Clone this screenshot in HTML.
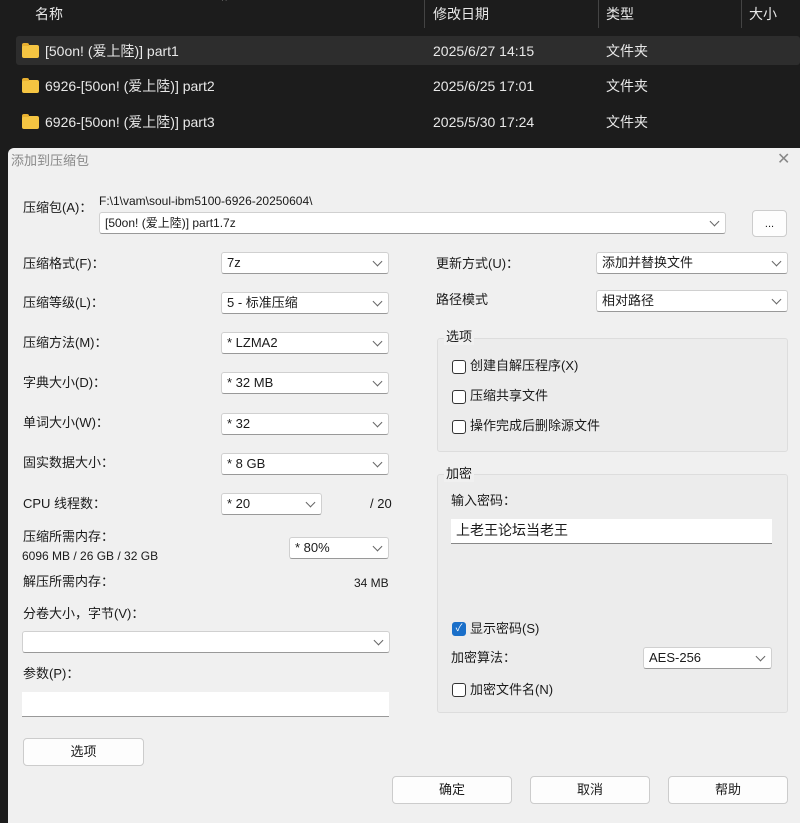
<!DOCTYPE html><html><head><meta charset="utf-8"><style>
*{box-sizing:border-box;margin:0;padding:0}
body{width:800px;height:823px;background:#1c1c1c;position:relative;overflow:hidden;font-family:"Liberation Sans","Noto Sans CJK SC",sans-serif;font-size:13px;color:#1a1a1a;line-height:16px}
.a{position:absolute;white-space:nowrap}
.w{color:#e8e8e8;font-size:14px;line-height:18px}
.dlg{position:absolute;left:8px;top:148px;width:800px;height:675px;background:#f0f0f0;border-radius:6px 0 0 0}
.cb{position:absolute;height:22px;background:#fff;border:1px solid #d0d0d0;border-bottom-color:#999;border-radius:3px;padding:2px 0 0 5px;font-size:13px}
.cb:after{content:"";position:absolute;right:7px;top:5px;width:6px;height:6px;border-right:1px solid #666;border-bottom:1px solid #666;transform:rotate(45deg)}
.btn{position:absolute;height:28px;background:#fdfdfd;border:1px solid #ccc;border-radius:4px;text-align:center;line-height:26px;font-size:13px}
.gb{position:absolute;border:1px solid #ddd;border-radius:3px;background:#ececec}
.ck{position:absolute;width:14px;height:14px;border:1px solid #333;border-radius:3px;background:#fff}
.fold{position:absolute;width:17px;height:13px;background:#f5c542;border-radius:2px}
.fold:before{content:"";position:absolute;left:0;top:-2px;width:7px;height:3px;background:#e8b030;border-radius:2px 2px 0 0}
</style></head><body>
<div class="a w" style="left:35px;top:5px">名称</div>
<div class="a" style="left:222px;top:-6px;color:#aaa;font-size:10px">^</div>
<div class="a" style="left:424px;top:0;width:1px;height:28px;background:#444"></div>
<div class="a w" style="left:433px;top:5px">修改日期</div>
<div class="a" style="left:598px;top:0;width:1px;height:28px;background:#444"></div>
<div class="a w" style="left:606px;top:5px">类型</div>
<div class="a" style="left:741px;top:0;width:1px;height:28px;background:#444"></div>
<div class="a w" style="left:749px;top:5px">大小</div>
<div class="a" style="left:16px;top:36px;width:784px;height:29px;background:#2d2d2d;border-radius:3px"></div>
<div class="fold" style="left:22px;top:45px"></div><div class="a w" style="left:45px;top:42px">[50on! (爱上陸)] part1</div><div class="a w" style="left:433px;top:42px">2025/6/27 14:15</div><div class="a w" style="left:606px;top:42px">文件夹</div>
<div class="fold" style="left:22px;top:80px"></div><div class="a w" style="left:45px;top:77px">6926-[50on! (爱上陸)] part2</div><div class="a w" style="left:433px;top:77px">2025/6/25 17:01</div><div class="a w" style="left:606px;top:77px">文件夹</div>
<div class="fold" style="left:22px;top:116px"></div><div class="a w" style="left:45px;top:113px">6926-[50on! (爱上陸)] part3</div><div class="a w" style="left:433px;top:113px">2025/5/30 17:24</div><div class="a w" style="left:606px;top:113px">文件夹</div>
<div class="dlg"></div>
<div class="a" style="left:11px;top:153px;color:#888;font-size:13px">添加到压缩包</div>
<div class="a" style="left:777px;top:152px;color:#888;font-size:16px;font-weight:300">✕</div>
<div class="a" style="left:23px;top:200px">压缩包(A)：</div>
<div class="a" style="left:99px;top:193px;font-size:12px">F:\1\vam\soul-ibm5100-6926-20250604\</div>
<div class="cb" style="left:99px;top:212px;width:627px;font-size:12px">[50on! (爱上陸)] part1.7z</div>
<div class="btn" style="left:752px;top:210px;width:35px;height:27px;font-size:11px">...</div>
<div class="a" style="left:23px;top:256px">压缩格式(F)：</div><div class="cb" style="left:221px;top:252px;width:168px">7z</div>
<div class="a" style="left:23px;top:295px">压缩等级(L)：</div><div class="cb" style="left:221px;top:292px;width:168px">5 - 标准压缩</div>
<div class="a" style="left:23px;top:335px">压缩方法(M)：</div><div class="cb" style="left:221px;top:332px;width:168px">* LZMA2</div>
<div class="a" style="left:23px;top:375px">字典大小(D)：</div><div class="cb" style="left:221px;top:372px;width:168px">* 32 MB</div>
<div class="a" style="left:23px;top:415px">单词大小(W)：</div><div class="cb" style="left:221px;top:413px;width:168px">* 32</div>
<div class="a" style="left:23px;top:455px">固实数据大小：</div><div class="cb" style="left:221px;top:453px;width:168px">* 8 GB</div>
<div class="a" style="left:23px;top:496px">CPU 线程数：</div><div class="cb" style="left:221px;top:493px;width:101px">* 20</div><div class="a" style="left:370px;top:496px">/ 20</div>
<div class="a" style="left:23px;top:529px">压缩所需内存：</div><div class="a" style="left:22px;top:548px;font-size:12px">6096 MB / 26 GB / 32 GB</div><div class="cb" style="left:289px;top:537px;width:100px">* 80%</div>
<div class="a" style="left:23px;top:574px">解压所需内存：</div><div class="a" style="left:354px;top:575px;font-size:12px">34 MB</div>
<div class="a" style="left:23px;top:606px">分卷大小，字节(V)：</div><div class="cb" style="left:22px;top:631px;width:368px"></div>
<div class="a" style="left:23px;top:666px">参数(P)：</div><div class="a" style="left:22px;top:692px;width:367px;height:25px;background:#fff;border-bottom:1px solid #999"></div>
<div class="btn" style="left:23px;top:738px;width:121px">选项</div>
<div class="a" style="left:436px;top:256px">更新方式(U)：</div><div class="cb" style="left:596px;top:252px;width:192px">添加并替换文件</div>
<div class="a" style="left:436px;top:292px">路径模式</div><div class="cb" style="left:596px;top:290px;width:192px">相对路径</div>
<div class="gb" style="left:437px;top:338px;width:351px;height:114px"></div>
<div class="a" style="left:444px;top:329px;background:#f0f0f0;padding:0 2px">选项</div>
<div class="ck" style="left:452px;top:360px"></div><div class="a" style="left:470px;top:358px">创建自解压程序(X)</div>
<div class="ck" style="left:452px;top:390px"></div><div class="a" style="left:470px;top:388px">压缩共享文件</div>
<div class="ck" style="left:452px;top:420px"></div><div class="a" style="left:470px;top:418px">操作完成后删除源文件</div>
<div class="gb" style="left:437px;top:474px;width:351px;height:239px"></div>
<div class="a" style="left:444px;top:466px;background:#f0f0f0;padding:0 2px">加密</div>
<div class="a" style="left:451px;top:493px">输入密码：</div>
<div class="a" style="left:451px;top:519px;width:321px;height:25px;background:#fff;border-bottom:1px solid #888;padding:2px 5px;font-size:14px;line-height:18px">上老王论坛当老王</div>
<div class="ck" style="left:452px;top:622px;background:#1a6fc9;border-color:#1a6fc9;color:#fff;font-size:10px;line-height:12px;text-align:center">✓</div><div class="a" style="left:470px;top:621px">显示密码(S)</div>
<div class="a" style="left:451px;top:650px">加密算法：</div><div class="cb" style="left:643px;top:647px;width:129px">AES-256</div>
<div class="ck" style="left:452px;top:683px"></div><div class="a" style="left:470px;top:682px">加密文件名(N)</div>
<div class="btn" style="left:392px;top:776px;width:120px">确定</div>
<div class="btn" style="left:530px;top:776px;width:120px">取消</div>
<div class="btn" style="left:668px;top:776px;width:120px">帮助</div>
</body></html>
